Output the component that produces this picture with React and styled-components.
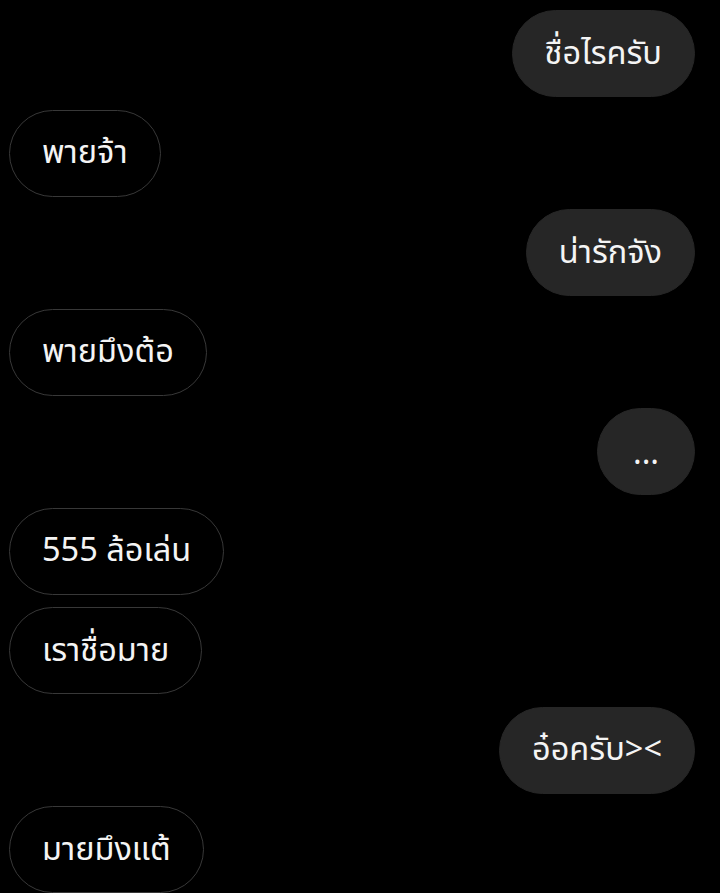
import React from "react";
import styled, { createGlobalStyle } from "styled-components";

const Global = createGlobalStyle`
  html, body { margin: 0; padding: 0; background: #000; }
  body { font-family: "Noto Sans", "Noto Sans Thai", "Liberation Sans", sans-serif; }
`;

const Thread = styled.div`
  display: flex;
  flex-direction: column;
  gap: 12.5px;
  padding: 10px 25px 0 9px;
  width: 720px;
  height: 893px;
  box-sizing: border-box;
  overflow: hidden;
  background: #000;
`;

const Row = styled.div`
  display: flex;
  justify-content: ${(p) => (p.$me ? "flex-end" : "flex-start")};
`;

const Bubble = styled.div`
  height: 87px;
  min-width: 98px;
  box-sizing: border-box;
  display: flex;
  align-items: center;
  justify-content: center;
  padding: 0 32px;
  border-radius: 44px;
  font-size: 32.5px;
  color: #f4f4f4;
  white-space: nowrap;
  background: ${(p) => (p.$me ? "#262626" : "#000")};
  border: 1.5px solid ${(p) => (p.$me ? "#262626" : "#383838")};
`;

const messages = [
  { me: true, text: "ชื่อไรครับ" },
  { me: false, text: "พายจ้า" },
  { me: true, text: "น่ารักจัง" },
  { me: false, text: "พายมึงต้อ" },
  { me: true, text: "..." },
  { me: false, text: "555 ล้อเล่น" },
  { me: false, text: "เราชื่อมาย" },
  { me: true, text: "อ๋อครับ><" },
  { me: false, text: "มายมึงแต้" },
];

export default function App() {
  return (
    <>
      <Global />
      <Thread>
        {messages.map((m, i) => (
          <Row key={i} $me={m.me}>
            <Bubble $me={m.me}>{m.text}</Bubble>
          </Row>
        ))}
      </Thread>
    </>
  );
}
